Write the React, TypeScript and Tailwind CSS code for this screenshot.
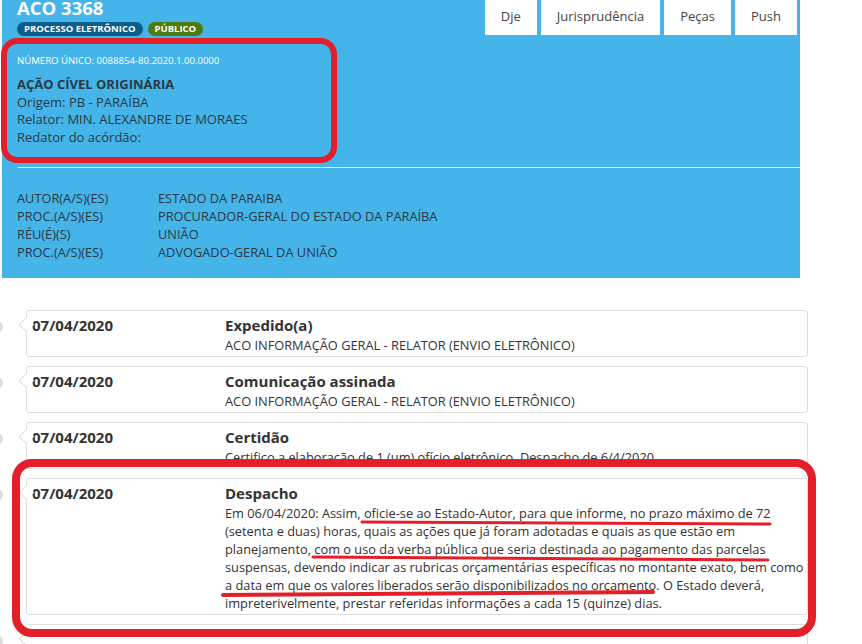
import React from "react"

const buttons = ["Dje", "Jurisprudência", "Peças", "Push"]

const parties: [string, string][] = [
  ["AUTOR(A/S)(ES)", "ESTADO DA PARAIBA"],
  ["PROC.(A/S)(ES)", "PROCURADOR-GERAL DO ESTADO DA PARAÍBA"],
  ["RÉU(É)(S)", "UNIÃO"],
  ["PROC.(A/S)(ES)", "ADVOGADO-GERAL DA UNIÃO"],
]

interface Andamento {
  date: string
  title: string
  lines: string[]
}

const andamentos: Andamento[] = [
  { date: "07/04/2020", title: "Expedido(a)", lines: ["ACO INFORMAÇÃO GERAL - RELATOR (ENVIO ELETRÔNICO)"] },
  { date: "07/04/2020", title: "Comunicação assinada", lines: ["ACO INFORMAÇÃO GERAL - RELATOR (ENVIO ELETRÔNICO)"] },
  { date: "07/04/2020", title: "Certidão", lines: ["Certifico a elaboração de 1 (um) ofício eletrônico. Despacho de 6/4/2020."] },
  {
    date: "07/04/2020",
    title: "Despacho",
    lines: [
      "Em 06/04/2020: Assim, oficie-se ao Estado-Autor, para que informe, no prazo máximo de 72",
      "(setenta e duas) horas, quais as ações que já foram adotadas e quais as que estão em",
      "planejamento, com o uso da verba pública que seria destinada ao pagamento das parcelas",
      "suspensas, devendo indicar as rubricas orçamentárias específicas no montante exato, bem como",
      "a data em que os valores liberados serão disponibilizados no orçamento. O Estado deverá,",
      "impreterivelmente, prestar referidas informações a cada 15 (quinze) dias.",
    ],
  },
  { date: "", title: "", lines: [""] },
]

function Header() {
  return (
    <div className="ml-[2px] w-[798px] h-[278px] bg-[#44b4e9]">
      <div className="flex items-start justify-between">
        <div className="pl-[15px]">
          <div className="mt-[-2px] text-[18.5px] leading-[20px] font-bold text-white">ACO 3368</div>
          <div className="mt-[4px] flex gap-[5px]">
            <span className="h-[14px] px-[7px] rounded-full bg-[#0b5e8c] text-white text-[9.5px] leading-[14px] font-bold">
              PROCESSO ELETRÔNICO
            </span>
            <span className="h-[14px] px-[7px] rounded-full bg-[#4a7c12] text-white text-[9.5px] leading-[14px] font-bold">
              PÚBLICO
            </span>
          </div>
        </div>
        <div className="flex gap-[4px] pr-[3px]">
          {buttons.map((b) => (
            <div key={b} className="h-[35px] px-[16px] bg-white flex items-center pb-[2px] text-[13px] text-[#444]">
              {b}
            </div>
          ))}
        </div>
      </div>

      {/* Identificação do processo */}
      <div className="pl-[15px] mt-[19px]">
        <div className="text-[9.6px] leading-[12px] text-white">NÚMERO ÚNICO: 0088854-80.2020.1.00.0000</div>
        <div className="mt-[9px] text-[13px] leading-[17.5px] text-[#2b3a44]">
          <div className="font-bold">AÇÃO CÍVEL ORIGINÁRIA</div>
          <div>Origem: PB - PARAÍBA</div>
          <div>Relator: MIN. ALEXANDRE DE MORAES</div>
          <div>Redator do acórdão:</div>
        </div>
      </div>

      <div className="ml-[16px] mt-[21px] h-[1px] bg-white/80" />

      {/* Partes */}
      <div className="pl-[15px] mt-[21px] text-[12.8px] leading-[18px] text-[#2b3a44]">
        {parties.map(([label, value], i) => (
          <div key={i} className="flex">
            <span className="w-[141px]">{label}</span>
            <span>{value}</span>
          </div>
        ))}
      </div>
    </div>
  )
}

function Card({ item }: { item: Andamento }) {
  return (
    <div className="relative mb-[9px]">
      {/* timeline dot */}
      <span className="absolute left-[-9px] top-[11px] w-[12px] h-[12px] rounded-full bg-[#dedede]" />
      <div className="relative ml-[26px] w-[782px] border border-[#dddddd] rounded-[3px] bg-white flex pt-[4px] pb-[2px]">
        <span className="absolute left-[-6px] top-[8px] w-[11px] h-[11px] rotate-45 bg-white border-l border-b border-[#dddddd]" />
        <div className="w-[198px] pl-[5px] text-[15px] leading-[20px] font-bold text-[#333]">{item.date}</div>
        <div className="flex-1 text-[#333]">
          <div className="h-[21px] text-[15px] leading-[20px] font-bold">{item.title}</div>
          <div className="text-[12.8px] leading-[18px]">
            {item.lines.map((l, i) => (
              <div key={i} className="h-[18px] whitespace-nowrap">{l}</div>
            ))}
          </div>
        </div>
      </div>
    </div>
  )
}

export default function App() {
  return (
    <div className="relative w-[862px] h-[644px] overflow-hidden bg-white" style={{ fontFamily: '"Open Sans", sans-serif' }}>
      <Header />
      <div className="mt-[32px]">
        {andamentos.map((a, i) => (
          <Card key={i} item={a} />
        ))}
      </div>

      {/* marcações em vermelho */}
      <svg className="absolute left-0 top-0 pointer-events-none" width="862" height="644" viewBox="0 0 862 644">
        <rect x="4" y="41" width="330" height="119" rx="13" fill="none" stroke="#e3202a" strokeWidth="6" />
        <rect x="16" y="463" width="796" height="170" rx="16" fill="none" stroke="#e3202a" strokeWidth="8" />
        <line x1="362" y1="522" x2="770" y2="524" stroke="#e3202a" strokeWidth="3" strokeLinecap="round" />
        <line x1="313" y1="557" x2="768" y2="560" stroke="#e3202a" strokeWidth="3" strokeLinecap="round" />
        <line x1="223" y1="595" x2="653" y2="592" stroke="#e3202a" strokeWidth="4" strokeLinecap="round" />
      </svg>
    </div>
  )
}
